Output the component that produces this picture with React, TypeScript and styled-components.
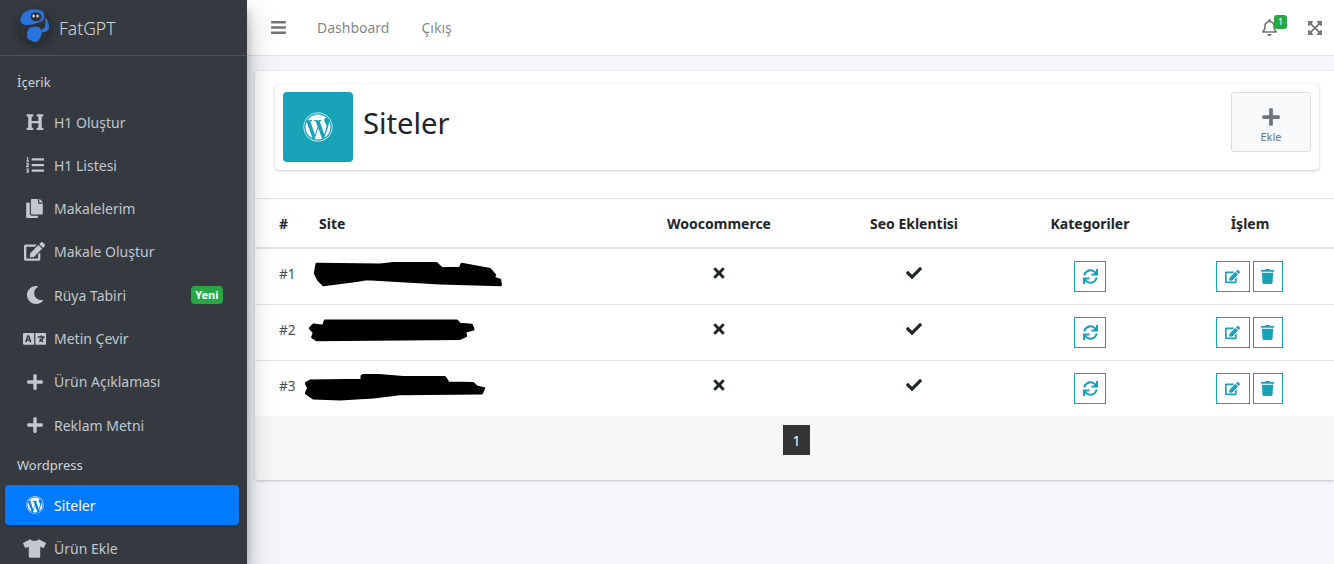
import React from "react";
import styled, { createGlobalStyle } from "styled-components";
import {
  FaHeading, FaListOl, FaCopy, FaEdit, FaMoon, FaLanguage, FaPlus, FaWordpress, FaTshirt,
  FaBars, FaRegBell, FaExpandArrowsAlt, FaSync, FaTrash, FaTimes, FaCheck,
} from "react-icons/fa";

const Global = createGlobalStyle`
  html, body { margin: 0; padding: 0; height: 100%; overflow: hidden; }
  body { font-family: "Noto Sans", "Liberation Sans", sans-serif; font-size: 14px; color: #212529; background: #f4f6f9; }
  * { box-sizing: border-box; }
`;

const Shell = styled.div`
  display: flex;
  height: 564px;
  overflow: hidden;
`;

const Sidebar = styled.aside`
  flex: 0 0 247px;
  background: #343a40;
  box-shadow: 0 14px 28px rgba(0,0,0,.25), 0 10px 10px rgba(0,0,0,.22);
  position: relative;
  z-index: 2;
  overflow: hidden;
`;

const Brand = styled.div`
  height: 56px;
  display: flex;
  align-items: center;
  gap: 8px;
  padding-left: 18px;
  border-bottom: 1px solid #4b545c;
  color: rgba(255,255,255,.8);
  font-size: 17.5px;
  font-weight: 300;
`;

const LogoMark = styled.svg`
  width: 33px;
  height: 34px;
  flex: none;
  margin-top: -3px;
  filter: drop-shadow(0 3px 4px rgba(0,0,0,.35));
`;

const Menu = styled.nav`
  padding: 9px 0 0 8px;
  display: flex;
  flex-direction: column;
  width: 239px;
`;

const Section = styled.div`
  height: 37px;
  display: flex;
  align-items: center;
  padding: 0 0 3px 9px;
  color: #d0d4db;
  font-size: 13px;
`;

const Item = styled.a<{ $active?: boolean }>`
  display: flex;
  flex: none;
  align-items: center;
  height: 40px;
  margin: 0 0 3.3px -3px;
  padding: 0 16px 0 18px;
  border-radius: 4px;
  font-size: 14px;
  color: ${(p) => (p.$active ? "#fff" : "#c2c7d0")};
  background: ${(p) => (p.$active ? "#007bff" : "transparent")};
  box-shadow: ${(p) => (p.$active ? "0 1px 3px rgba(0,0,0,.2)" : "none")};
`;

const IconSlot = styled.span<{ $size?: number }>`
  flex: 0 0 31px;
  display: flex;
  align-items: center;
  justify-content: center;
  font-size: ${(p) => p.$size ?? 18}px;
  line-height: 1;
  position: relative;
  left: -4px;
`;

const ItemLabel = styled.span`
  flex: 1;
  white-space: nowrap;
`;

const NewBadge = styled.span`
  background: #28a745;
  color: #fff;
  font-size: 11px;
  font-weight: 700;
  line-height: 12px;
  padding: 3px 4.5px;
  border-radius: 4px;
`;

const Main = styled.div`
  flex: 1;
  min-width: 0;
  display: flex;
  flex-direction: column;
`;

const Navbar = styled.header`
  flex: 0 0 56px;
  background: #fff;
  border-bottom: 1px solid #dee2e6;
  display: flex;
  align-items: center;
  padding: 0 11px 0 23px;
  color: rgba(0,0,0,.5);
`;

const NavIcon = styled.span<{ $size: number }>`
  display: flex;
  color: rgba(0,0,0,.55);
  font-size: ${(p) => p.$size}px;
`;

const NavLink = styled.a<{ $first?: boolean }>`
  font-size: 14px;
  margin-left: ${(p) => (p.$first ? "30px" : "32px")};
`;

const Spacer = styled.div`
  flex: 1;
`;

const Bell = styled.span`
  position: relative;
  display: flex;
  font-size: 17px;
  color: rgba(0,0,0,.55);
  margin-right: 29px;
`;

const BellCount = styled.span`
  position: absolute;
  top: -4px;
  right: -9px;
  width: 13px;
  height: 14px;
  border-radius: 3px;
  background: #28a745;
  color: #fff;
  font-size: 9px;
  line-height: 14px;
  text-align: center;
`;

const Content = styled.main`
  flex: 1;
  padding: 15px 0 0 8px;
  background: #f4f6f9;
`;

const Card = styled.section`
  background: #fff;
  border-radius: 4px 0 0 4px;
  box-shadow: 0 0 1px rgba(0,0,0,.125), 0 1px 3px rgba(0,0,0,.2);
  display: flex;
  flex-direction: column;
  height: 409px;
  overflow: hidden;
`;

const HeaderWrap = styled.div`
  height: 128px;
  padding: 13px 15px 0 20px;
  border-bottom: 1px solid #dee2e6;
`;

const InfoBox = styled.div`
  height: 86px;
  display: flex;
  align-items: flex-start;
  padding: 8px;
  background: #fff;
  border-radius: 4px;
  box-shadow: 0 0 1px rgba(0,0,0,.125), 0 1px 3px rgba(0,0,0,.2);
`;

const InfoIcon = styled.div`
  width: 70px;
  height: 70px;
  flex: none;
  background: #17a2b8;
  border-radius: 4px;
  display: flex;
  align-items: center;
  justify-content: center;
  color: #fff;
  font-size: 30px;
`;

const PageTitle = styled.h1`
  flex: 1;
  margin: 0 0 0 10px;
  height: 70px;
  line-height: 62px;
  font-size: 29.2px;
  font-weight: 400;
  color: #212529;
`;

const AddButton = styled.button`
  width: 80px;
  height: 60px;
  padding: 7px 0 0;
  border: 1px solid #ddd;
  border-radius: 3px;
  background: #f8f9fa;
  color: #6c757d;
  font-family: inherit;
  font-size: 11px;
  display: flex;
  flex-direction: column;
  align-items: center;
  justify-content: center;
  gap: 2px;
`;

const AddGlyph = styled.span`
  display: flex;
  font-size: 20px;
  color: #6c757d;
`;

const Table = styled.table`
  width: 100%;
  border-collapse: collapse;
  table-layout: fixed;
`;

const HeadCell = styled.th<{ $left?: boolean; $first?: boolean; $w: number }>`
  width: ${(p) => p.$w}px;
  height: 49px;
  padding: 0 12px 0 ${(p) => (p.$first ? "24px" : "12px")};
  text-align: ${(p) => (p.$left ? "left" : "center")};
  font-size: 14px;
  font-weight: 700;
  border-bottom: 2px solid #dee2e6;
`;

const Row = styled.tr`
  & + & td { border-top: 1px solid #dee2e6; }
`;

const Cell = styled.td<{ $left?: boolean; $first?: boolean; $lift: number }>`
  height: 56px;
  padding: 0 12px ${(p) => p.$lift}px ${(p) => (p.$first ? "24px" : "12px")};
  text-align: ${(p) => (p.$left ? "left" : "center")};
  font-size: 13.6px;
  color: #4a4f55;
  vertical-align: middle;
`;

const Mark = styled.span`
  display: inline-flex;
  font-size: 16px;
  color: #212529;
  vertical-align: middle;
`;

const Redaction = styled.svg`
  display: block;
  width: 200px;
  height: 30px;
  margin: 4px 0 0 -14px;
`;

const ActionGroup = styled.div<{ $nudge?: boolean }>`
  display: flex;
  justify-content: center;
  gap: 3px;
  margin-top: 1px;
  padding-right: ${(p) => (p.$nudge ? "2px" : "0")};
`;

const ActionButton = styled.button<{ $w: number }>`
  width: ${(p) => p.$w}px;
  height: 31px;
  padding: 0;
  border: 1px solid #17a2b8;
  background: #fff;
  color: #17a2b8;
  font-size: 15px;
  display: inline-flex;
  align-items: center;
  justify-content: center;
`;

const Footer = styled.footer`
  flex: 1;
  background: #f7f7f7;
  display: flex;
  justify-content: center;
  padding: 9px 0 0 0;
`;

const PageNumber = styled.span`
  width: 27px;
  height: 30px;
  margin-left: 4px;
  background: #343434;
  color: #fff;
  font-size: 14px;
  display: flex;
  align-items: center;
  justify-content: center;
`;

const Logo = () => (
  <LogoMark viewBox="0 0 33 34">
    <circle cx="16.5" cy="17" r="16.5" fill="#2d3238" />
    <path d="M2 11 C3 7 5 4 7 3 C10 1 12 0.5 15 0.5 C19 0.3 23 1 24 2 C26 3.5 26.5 5 26 6 C26.5 8 26.5 10 25.5 11 C23 13 21 13.5 19 14 C16 15 13 16 10 16 C7 16.5 4 16 2 11 Z" fill="#2a72dc" />
    <ellipse cx="18" cy="7.7" rx="5.5" ry="4.5" fill="#2d3238" />
    <ellipse cx="15.6" cy="6.9" rx="1.1" ry="1.5" fill="#dbe7fb" />
    <ellipse cx="19.6" cy="6.9" rx="1.1" ry="1.5" fill="#dbe7fb" />
    <path d="M9 23 C10 20 12 18 15 18 C18 17.6 21 18 22 19 C24 21 24.5 23 24 24 C23 28 21 31 19 33 C17 33.4 15 33 14 32 C11 31 9 29 9 28 Z" fill="#2a72dc" />
    <path d="M27 9 C29 10 30 11.5 30 13 C31 15 31 17 31 19 C30 21 29 22.5 27 23 L24 23 L24 20 C25.5 19.5 26.5 19 27 18 C27.5 15 27.5 12 27 9 Z" fill="#2a72dc" />
  </LogoMark>
);

const scribbles = [
  "M11.7 2 L75 2.7 L88 1.3 L131.7 1.3 L136.7 6.3 L155 6.3 L156.7 2 L185 7.3 L190 13 L188.3 15.7 L195 18 L195.7 23 L135 21.3 L61.7 17 L51.7 18.7 L18.3 23 L13.3 18 L10 11.3 Z",
  "M20 2.7 L151.7 2.7 L155 6 L166.7 7 L168.3 11.3 L160 13.7 L161 18 L155 20.7 L11.7 22 L7.3 19.3 L9 14.7 L5 10.3 L8.3 6.7 L18.3 8 Z",
  "M58.3 1 L71.7 1 L98.3 3.3 L140 3.3 L143.3 8.7 L168.3 9.3 L171.7 12.7 L179 14.3 L176.7 19.3 L95 20 L68.3 23.3 L35 25.3 L8.3 24.3 L1 19.3 L3.3 14.3 L1 9.3 L5 6.7 L56.7 6 L56.7 2 Z",
];

const menuA: [React.ReactNode, string, number?][] = [
  [<FaHeading />, "H1 Oluştur"],
  [<FaListOl />, "H1 Listesi"],
  [<FaCopy />, "Makalelerim", 19],
  [<FaEdit />, "Makale Oluştur", 21],
  [<FaMoon />, "Rüya Tabiri"],
  [<FaLanguage />, "Metin Çevir", 23.5],
  [<FaPlus />, "Ürün Açıklaması"],
  [<FaPlus />, "Reklam Metni"],
];

export default function App() {
  return (
    <Shell>
      <Global />
      <Sidebar>
        <Brand>
          <Logo />
          FatGPT
        </Brand>
        <Menu>
          <Section>İçerik</Section>
          {menuA.map(([icon, label, size]) => (
            <Item key={label}>
              <IconSlot $size={size}>{icon}</IconSlot>
              <ItemLabel>{label}</ItemLabel>
              {label === "Rüya Tabiri" && <NewBadge>Yeni</NewBadge>}
            </Item>
          ))}
          <Section>Wordpress</Section>
          <Item $active>
            <IconSlot><FaWordpress /></IconSlot>
            <ItemLabel>Siteler</ItemLabel>
          </Item>
          <Item>
            <IconSlot $size={23}><FaTshirt /></IconSlot>
            <ItemLabel>Ürün Ekle</ItemLabel>
          </Item>
        </Menu>
      </Sidebar>
      <Main>
        <Navbar>
          <NavIcon $size={17}><FaBars /></NavIcon>
          <NavLink $first>Dashboard</NavLink>
          <NavLink>Çıkış</NavLink>
          <Spacer />
          <Bell>
            <FaRegBell />
            <BellCount>1</BellCount>
          </Bell>
          <NavIcon $size={16}><FaExpandArrowsAlt /></NavIcon>
        </Navbar>
        <Content>
          <Card>
            <HeaderWrap>
              <InfoBox>
                <InfoIcon><FaWordpress /></InfoIcon>
                <PageTitle>Siteler</PageTitle>
                <AddButton>
                  <AddGlyph><FaPlus /></AddGlyph>
                  Ekle
                </AddButton>
              </InfoBox>
            </HeaderWrap>
            <Table>
              <thead>
                <tr>
                  <HeadCell $w={52} $left $first>#</HeadCell>
                  <HeadCell $w={317} $left>Site</HeadCell>
                  <HeadCell $w={190}>Woocommerce</HeadCell>
                  <HeadCell $w={200}>Seo Eklentisi</HeadCell>
                  <HeadCell $w={152}>Kategoriler</HeadCell>
                  <HeadCell $w={168}>İşlem</HeadCell>
                </tr>
              </thead>
              <tbody>
                {scribbles.map((d, i) => (
                  <Row key={d}>
                    <Cell $left $first $lift={5}>#{i + 1}</Cell>
                    <Cell $left $lift={3}>
                      <Redaction viewBox="0 0 200 30">
                        <path d={d} fill="#000" stroke="#000" strokeWidth="2.4" strokeLinejoin="round" />
                      </Redaction>
                    </Cell>
                    <Cell $lift={10}><Mark><FaTimes /></Mark></Cell>
                    <Cell $lift={10}><Mark><FaCheck /></Mark></Cell>
                    <Cell $lift={0}>
                      <ActionGroup>
                        <ActionButton $w={32}><FaSync /></ActionButton>
                      </ActionGroup>
                    </Cell>
                    <Cell $lift={0}>
                      <ActionGroup $nudge>
                        <ActionButton $w={34}><FaEdit /></ActionButton>
                        <ActionButton $w={30}><FaTrash /></ActionButton>
                      </ActionGroup>
                    </Cell>
                  </Row>
                ))}
              </tbody>
            </Table>
            <Footer>
              <PageNumber>1</PageNumber>
            </Footer>
          </Card>
        </Content>
      </Main>
    </Shell>
  );
}
